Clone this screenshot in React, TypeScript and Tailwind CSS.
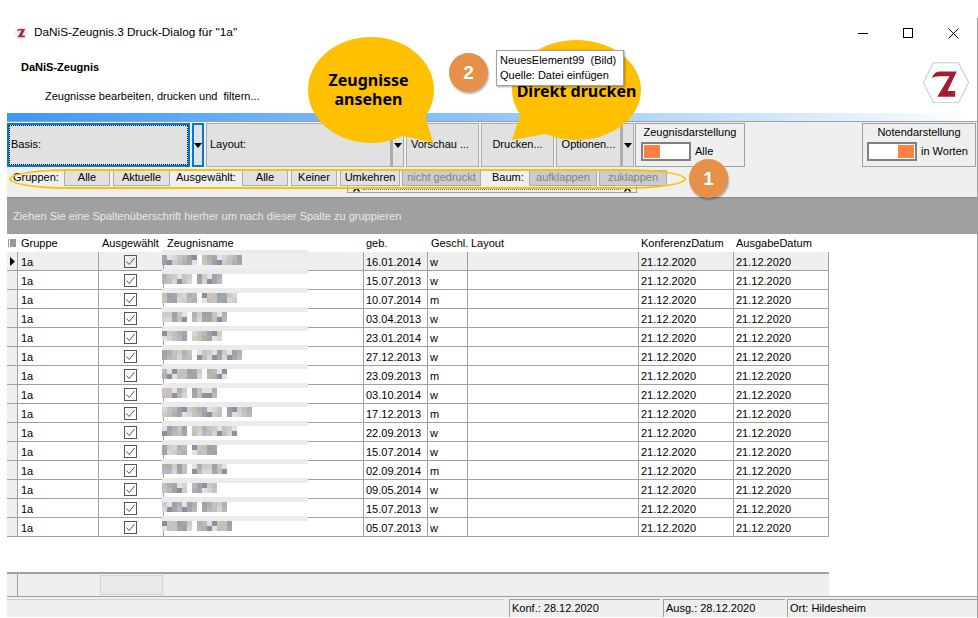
import React from 'react'

const FONT = "font-['Liberation_Sans',Arial,sans-serif]"
const BOLD_FONT = "font-['Noto_Sans',sans-serif]"

const rows = [
  { date: '16.01.2014', sex: 'w', tiles: 16, gap: 7 },
  { date: '15.07.2013', sex: 'w', tiles: 12, gap: 6 },
  { date: '10.07.2014', sex: 'm', tiles: 15, gap: 7 },
  { date: '03.04.2013', sex: 'w', tiles: 13, gap: 5 },
  { date: '23.01.2014', sex: 'w', tiles: 12, gap: 5 },
  { date: '27.12.2013', sex: 'w', tiles: 16, gap: 6 },
  { date: '23.09.2013', sex: 'm', tiles: 13, gap: 8 },
  { date: '03.10.2014', sex: 'w', tiles: 11, gap: 5 },
  { date: '17.12.2013', sex: 'm', tiles: 18, gap: 12 },
  { date: '22.09.2013', sex: 'w', tiles: 15, gap: 5 },
  { date: '15.07.2014', sex: 'w', tiles: 11, gap: 5 },
  { date: '02.09.2014', sex: 'm', tiles: 13, gap: 5 },
  { date: '09.05.2014', sex: 'w', tiles: 11, gap: 5 },
  { date: '15.07.2013', sex: 'w', tiles: 13, gap: 7 },
  { date: '05.07.2013', sex: 'w', tiles: 14, gap: 6 },
]

const palette = ['#a9a4a8', '#c6c3c0', '#8e8e9c', '#b5b0a6', '#d6d6da', '#9aa3ad', '#c9bdb8', '#dfe2e6', '#b8b8c2', '#cfcbc6']

const columns = 'grid grid-cols-[11px_81px_65px_200px_64px_40px_171px_95px_95px]'

// Unleserlich gemachte Namen als Kacheln
const BlurredName = ({ row, index }: { row: (typeof rows)[number]; index: number }) => (
  <>
    <div className="absolute left-[-2px] top-[-2px] h-[5px] w-[146px] bg-[#ebebeb]" />
    <div className="absolute left-[-2px] top-[3px] flex flex-col">
      {[0, 1].map((line) => (
        <div key={line} className="flex h-[5px]">
          {Array.from({ length: row.tiles }).map((_, t) => (
            <div
              key={t}
              className="h-[5px] w-[5px]"
              style={{
                backgroundColor:
                  t === row.gap ? '#fbfbfb' : palette[(t * 7 + index * 3 + line * 5 + (t * index) % 4) % palette.length],
              }}
            />
          ))}
        </div>
      ))}
    </div>
  </>
)

const CheckBox = () => (
  <svg width="13" height="13" viewBox="0 0 13 13" className="block">
    <rect x="0.5" y="0.5" width="12" height="12" fill="none" stroke="#555" />
    <path d="M2.5 6.5 L5.2 9.5 L10.5 3" fill="none" stroke="#555" strokeWidth="1" />
  </svg>
)

const DropArrow = () => (
  <svg width="8" height="5" viewBox="0 0 8 5">
    <path d="M0 0 H8 L4 5 Z" fill="#000" />
  </svg>
)

const Caret = () => (
  <svg width="7" height="5" viewBox="0 0 7 5">
    <path d="M0.5 4.5 L3.5 1 L6.5 4.5" fill="none" stroke="#000" strokeWidth="1.4" />
  </svg>
)

const BigButton = ({ label, className }: { label: string; className: string }) => (
  <div className={`flex h-[44px] items-center border border-[#adadad] bg-[#e1e1e1] pb-[2px] ${className}`}>{label}</div>
)

const SmallButton = ({ label, className, disabled }: { label: string; className: string; disabled?: boolean }) => (
  <div
    className={`flex h-[16px] items-center justify-center border border-[#adadad] ${
      disabled ? 'bg-[#cccccc] text-[#838383]' : 'bg-[#e1e1e1]'
    } ${className}`}
  >
    {label}
  </div>
)

const Toggle = ({ right }: { right?: boolean }) => (
  <div className={`flex h-[19px] w-[50px] border-[2px] border-[#808080] bg-white p-[1px] ${right ? 'justify-end' : ''}`}>
    <div className="h-full w-[16px] bg-[#ff8040]" />
  </div>
)

const Badge = ({ n, className }: { n: string; className: string }) => (
  <div
    className={`absolute flex h-[39px] w-[39px] items-center justify-center rounded-full bg-[#e6904a] text-[19px] font-bold text-white shadow-[1px_2px_2px_rgba(0,0,0,0.3)] ${className}`}
  >
    {n}
  </div>
)

export default function App() {
  return (
    <div className={`relative h-[618px] w-[978px] overflow-hidden bg-white pl-[7px] pt-[18px] text-[11px] leading-none text-black ${FONT}`}>
      <div className="flex h-[600px] flex-col border-r border-[#a0a0a0]">
        {/* Titelleiste */}
        <div className="flex h-[30px] items-center justify-between pl-[7px] pr-[18px]">
          <div className="flex items-center gap-[6px]">
            <svg width="14" height="14" viewBox="0 0 14 14">
              <circle cx="7" cy="7" r="6.5" fill="#efefef" />
              <path d="M2.8 5 Q3.3 3 5 3 H11.2 L8 9.6 H10.8 V11.2 H3.6 L7.6 4.6 H5 Q3.8 4.6 2.8 5 Z" fill="#a8283f" />
            </svg>
            <span className="text-[11.8px]">DaNiS-Zeugnis.3 Druck-Dialog für "1a"</span>
          </div>
          <div className="flex items-center gap-[35px]">
            <svg width="10" height="10" viewBox="0 0 10 10"><path d="M0 5.5 H10" stroke="#000" /></svg>
            <svg width="10" height="10" viewBox="0 0 10 10"><rect x="0.5" y="0.5" width="9" height="9" fill="none" stroke="#000" /></svg>
            <svg width="11" height="11" viewBox="0 0 11 11"><path d="M0.5 0.5 L10.5 10.5 M10.5 0.5 L0.5 10.5" stroke="#000" /></svg>
          </div>
        </div>

        {/* Kopfbereich */}
        <div className="flex h-[65px] justify-between pl-[14px] pr-[8px]">
          <div className="flex flex-col pt-[14px]">
            <div className="font-bold">DaNiS-Zeugnis</div>
            <div className="pl-[24px] pt-[18px]">Zeugnisse bearbeiten, drucken und&nbsp; filtern...</div>
          </div>
          <svg width="46" height="41" viewBox="22 6 45 40" className="mt-[14px]">
            <path d="M22.3 26 L32.3 6.7 H56.7 L66.7 26 L56.7 45.7 H32.3 Z" fill="none" stroke="#c8c8c8" />
            <path d="M30.5 21.7 Q33 15.3 38 15.3 H55 L46 34.3 H53.5 V40 H36 L48 20 H38 Q33 20 30.5 21.7 Z" fill="#a51c30" />
          </svg>
        </div>

        {/* Verlaufsbalken */}
        <div className="h-[8px] bg-gradient-to-r from-[#3d97f5] via-[#8ec5fb] to-white" />

        {/* Werkzeugleiste */}
        <div className="flex h-[76px] flex-col border-t border-[#a0a0a0] bg-[#efefef]">
          <div className="flex h-[44px] pt-[1px]">
            <div className="flex h-[44px] w-[183px] items-center border-[2px] border-[#0078d7] bg-[#e1e1e1]">
              <div className="flex h-[40px] w-[179px] items-center border border-dotted border-black pb-[2px] pl-[1px]">Basis:</div>
            </div>
            <div className="ml-[2px] flex h-[44px] w-[12px] items-center justify-center border-[2px] border-[#0078d7] bg-[#e1e1e1]">
              <DropArrow />
            </div>
            <BigButton label="Layout:" className="ml-[2px] w-[185px] pl-[3px]" />
            <div className="flex h-[44px] w-[13px] items-center justify-center border border-l-[2px] border-[#adadad] bg-[#e1e1e1]">
              <DropArrow />
            </div>
            <BigButton label="Vorschau ..." className="ml-[2px] w-[73px] pl-[4px]" />
            <BigButton label="Drucken..." className="ml-[2px] w-[73px] justify-center" />
            <BigButton label="Optionen..." className="ml-[2px] w-[65px] justify-center" />
            <div className="flex h-[44px] w-[13px] items-center justify-center border border-l-[2px] border-[#adadad] bg-[#e1e1e1]">
              <DropArrow />
            </div>
            <div className="ml-[1px] flex h-[44px] w-[110px] flex-col items-center border border-[#a0a0a0] pt-[3px]">
              <span>Zeugnisdarstellung</span>
              <div className="mt-[4px] flex w-full items-center gap-[4px] pl-[5px]">
                <Toggle />
                <span>Alle</span>
              </div>
            </div>
            <div className="ml-[117px] flex h-[44px] w-[114px] flex-col items-center border border-[#a0a0a0] pt-[3px]">
              <span>Notendarstellung</span>
              <div className="mt-[4px] flex w-full items-center gap-[4px] pl-[4px]">
                <Toggle right />
                <span>in Worten</span>
              </div>
            </div>
          </div>
          <div className="flex h-[20px] items-center pt-[3px]">
            <span className="ml-[6px] w-[51px]">Gruppen:</span>
            <SmallButton label="Alle" className="w-[46px]" />
            <SmallButton label="Aktuelle" className="ml-[3px] w-[57px]" />
            <span className="ml-[6px] w-[66px]">Ausgewählt:</span>
            <SmallButton label="Alle" className="w-[46px]" />
            <SmallButton label="Keiner" className="ml-[3px] w-[46px]" />
            <SmallButton label="Umkehren" className="ml-[3px] w-[60px]" />
            <SmallButton label="nicht gedruckt" disabled className="ml-[2px] w-[79px]" />
            <span className="ml-[11px] w-[37px]">Baum:</span>
            <SmallButton label="aufklappen" disabled className="w-[68px]" />
            <SmallButton label="zuklappen" disabled className="ml-[2px] w-[68px]" />
          </div>
          <div className="ml-[340px] flex h-[7px] w-[290px] items-center justify-between border-x border-b border-[#a0a0a0] px-[5px]">
            <Caret />
            <div className="mx-[3px] flex-1 border-t border-dotted border-[#3d7fd0]" />
            <Caret />
          </div>
        </div>

        {/* Gruppierungsfeld */}
        <div className="flex h-[37px] items-center border-t border-[#8c8c8c] bg-[#a0a0a0] pl-[6px] pt-[1px] text-[#e8e8e8]">
          Ziehen Sie eine Spaltenüberschrift hierher um nach dieser Spalte zu gruppieren
        </div>

        {/* Tabelle */}
        <div className="flex h-[338px] flex-col">
          <div className={`${columns} h-[18px] w-[822px] items-center pt-[1px]`}>
            <div className="pl-[1px]">
              <svg width="8" height="9" viewBox="0 0 8 9">
                <path d="M0 1 H1 M0 3 H1 M0 5 H1 M0 7 H1 M2 1 H8 M2 3 H8 M2 5 H8 M2 7 H8" stroke="#333" />
              </svg>
            </div>
            <div className="pl-[3px]">Gruppe</div>
            <div className="pl-[3px]">Ausgewählt</div>
            <div className="pl-[3px]">Zeugnisname</div>
            <div className="pl-[2px]">geb.</div>
            <div className="pl-[3px]">Geschl.</div>
            <div className="pl-[3px]">Layout</div>
            <div className="pl-[2px]">KonferenzDatum</div>
            <div className="pl-[2px]">AusgabeDatum</div>
          </div>
          {rows.map((row, i) => (
            <div
              key={i}
              className={`${columns} h-[19px] w-[822px] border-b border-[#a0a0a0] ${i === 0 ? 'bg-[#efefef]' : ''} [&>div]:flex [&>div]:items-center [&>div]:border-r [&>div]:border-[#a0a0a0]`}
            >
              <div className="bg-[#efefef] pl-[3px]">
                {i === 0 && (
                  <svg width="5" height="9" viewBox="0 0 5 9"><path d="M0 0 L5 4.5 L0 9 Z" fill="#000" /></svg>
                )}
              </div>
              <div className="pl-[3px] pt-[2px]">1a</div>
              <div className="justify-center pr-[1px]"><CheckBox /></div>
              <div className="relative"><BlurredName row={row} index={i} /></div>
              <div className="pl-[2px] pt-[2px]">{row.date}</div>
              <div className="pl-[2px] pt-[2px]">{row.sex}</div>
              <div />
              <div className="pl-[2px] pt-[2px]">21.12.2020</div>
              <div className="pl-[2px] pt-[2px]">21.12.2020</div>
            </div>
          ))}
        </div>

        {/* Horizontale Bildlaufleiste */}
        <div className="flex h-[24px] w-[822px] border-t-[2px] border-[#a0a0a0] bg-[#efefef]">
          <div className="h-full w-[11px] border-r border-[#a0a0a0]" />
          <div className="ml-[82px] mt-[1px] h-[20px] w-[63px] border border-[#d4d4d4] bg-[#e8eaea]" />
        </div>

        {/* Statusleiste */}
        <div className="flex h-[21px] border-t border-[#a0a0a0] bg-[#efefef] pt-[2px]">
          <div className="h-full w-[497px] border-t border-[#d0d0d0]" />
          <div className="ml-[5px] flex h-full w-[151px] items-center border-l border-t border-[#a0a0a0] pl-[2px]">Konf.: 28.12.2020</div>
          <div className="ml-[3px] flex h-full w-[122px] items-center border-l border-t border-[#a0a0a0] pl-[2px]">Ausg.: 28.12.2020</div>
          <div className="ml-[2px] flex h-full flex-1 items-center border-l border-t border-[#a0a0a0] pl-[2px]">Ort: Hildesheim</div>
        </div>
      </div>

      {/* Anmerkungen über dem Dialog */}
      <div className="absolute left-[9px] top-[169px] h-[20px] w-[677px] rounded-[60px/10px] border-[2px] border-[#ffc000]" />

      <svg className="absolute left-[300px] top-[30px]" width="150" height="120" viewBox="300 30 150 120">
        <ellipse cx="371" cy="90" rx="63" ry="53" fill="#ffc000" />
        <path d="M425 115 L433 143 L400 135 Z" fill="#ffc000" />
      </svg>
      <div className={`absolute left-[306px] top-[72px] flex w-[125px] flex-col items-center gap-[2px] text-[16px] font-bold leading-[17px] ${BOLD_FONT}`}>
        <span>Zeugnisse</span>
        <span>ansehen</span>
      </div>

      <svg className="absolute left-[505px] top-[35px]" width="145" height="115" viewBox="505 35 145 115">
        <ellipse cx="576.5" cy="90" rx="64.5" ry="50" fill="#ffc000" />
        <path d="M521 112 L512 140 L546 134 Z" fill="#ffc000" />
      </svg>
      <div className={`absolute left-[512px] top-[83px] w-[129px] text-center text-[16px] font-bold leading-[17px] ${BOLD_FONT}`}>Direkt drucken</div>

      <div className="absolute left-[496px] top-[50px] flex h-[36px] w-[128px] flex-col justify-center gap-[4px] border border-[#a0a0a0] bg-white pl-[3px] shadow-[1px_1px_2px_rgba(0,0,0,0.35)]">
        <span>NeuesElement99&nbsp; (Bild)</span>
        <span>Quelle: Datei einfügen</span>
      </div>

      <Badge n="2" className="left-[449px] top-[53px]" />
      <Badge n="1" className="left-[689px] top-[159px]" />
    </div>
  )
}
